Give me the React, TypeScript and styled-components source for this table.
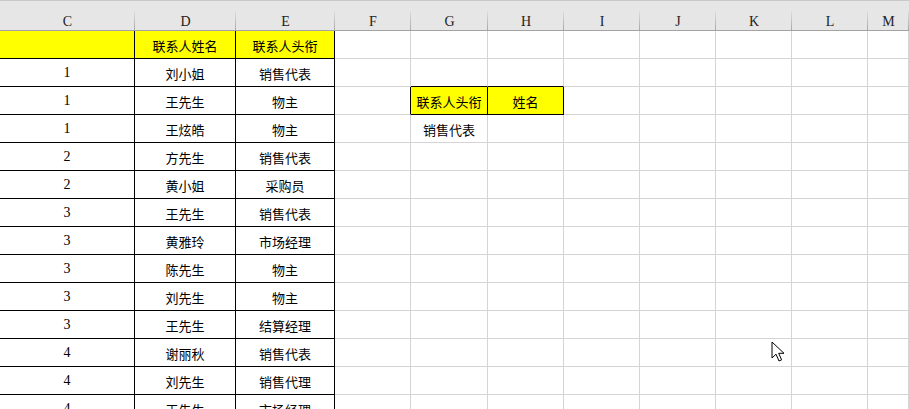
import React from "react";
import styled, { createGlobalStyle } from "styled-components";

const GlobalStyle = createGlobalStyle`
  html, body {
    margin: 0;
    padding: 0;
    background: #ffffff;
    overflow: hidden;
    height: 409px;
  }
  #root {
    height: 409px;
    overflow: hidden;
  }
`;

const COLS = "135px 101px 99px 76px 77px 76px 76px 76px 76px 76px 1fr";
const LETTERS = ["C", "D", "E", "F", "G", "H", "I", "J", "K", "L", "M"];

const Sheet = styled.div`
  position: relative;
  width: 909px;
  height: 409px;
  overflow: hidden;
  display: flex;
  flex-direction: column;
  background: #ffffff;
`;

const HeaderBar = styled.div`
  box-sizing: border-box;
  height: 31px;
  flex: none;
  background: #e6e6e6;
  border-top: 1px solid #c9c9c9;
  border-bottom: 1px solid #a3a3a3;
  padding-top: 10px;
`;

const HeaderGrid = styled.div`
  display: grid;
  grid-template-columns: ${COLS};
  height: 19px;
`;

const HeaderCell = styled.div`
  box-sizing: border-box;
  height: 19px;
  text-align: center;
  font-family: "Liberation Serif", "DejaVu Serif", serif;
  font-size: 14px;
  line-height: 22px;
  color: #222;
  background: linear-gradient(to bottom, #dedede, #a9a9a9) right top / 1px 100% no-repeat;
  overflow: hidden;
  white-space: nowrap;
`;

const Row = styled.div`
  display: grid;
  grid-template-columns: ${COLS};
  height: 28px;
  flex: none;
`;

const Cell = styled.div<{ $r?: boolean; $b?: boolean; $y?: boolean }>`
  box-sizing: border-box;
  height: 28px;
  border-right: 1px solid ${(p) => (p.$r ? "#000000" : "#d4d4d4")};
  border-bottom: 1px solid ${(p) => (p.$b ? "#000000" : "#d4d4d4")};
  background: ${(p) => (p.$y ? "#ffff00" : "#ffffff")};
  display: flex;
  align-items: center;
  justify-content: center;
  font-family: "Liberation Serif", "Noto Sans CJK SC", serif;
  font-size: 14px;
  color: #000;
  white-space: nowrap;
  overflow: hidden;
  padding-top: 1px;
`;

const CjkText = styled.span`
  font-family: "Noto Sans CJK SC", sans-serif;
  font-size: 13px;
`;

const Cursor = styled.svg`
  position: absolute;
  left: 771px;
  top: 341px;
  width: 14px;
  height: 22px;
`;

type RowData = [string, string, string];

const data: RowData[] = [
  ["1", "刘小姐", "销售代表"],
  ["1", "王先生", "物主"],
  ["1", "王炫皓", "物主"],
  ["2", "方先生", "销售代表"],
  ["2", "黄小姐", "采购员"],
  ["3", "王先生", "销售代表"],
  ["3", "黄雅玲", "市场经理"],
  ["3", "陈先生", "物主"],
  ["3", "刘先生", "物主"],
  ["3", "王先生", "结算经理"],
  ["4", "谢丽秋", "销售代表"],
  ["4", "刘先生", "销售代理"],
  ["4", "王先生", "市场经理"],
];

type Extra = { g?: string; h?: string; gy?: boolean; fR?: boolean; gB?: boolean };

const extras: Record<number, Extra> = {
  0: { gB: true },
  1: { g: "联系人头衔", h: "姓名", gy: true, fR: true, gB: true },
  2: { g: "销售代表" },
};

export default function App() {
  return (
    <>
      <GlobalStyle />
      <Sheet>
        <HeaderBar>
          <HeaderGrid>
            {LETTERS.map((l) => (
              <HeaderCell key={l}>{l}</HeaderCell>
            ))}
          </HeaderGrid>
        </HeaderBar>

        <Row>
          <Cell $r $b $y />
          <Cell $r $b $y>
            <CjkText>联系人姓名</CjkText>
          </Cell>
          <Cell $r $b $y>
            <CjkText>联系人头衔</CjkText>
          </Cell>
          <Cell />
          <Cell />
          <Cell />
          <Cell />
          <Cell />
          <Cell />
          <Cell />
          <Cell />
        </Row>

        {data.map((d, i) => {
          const ex = extras[i] || {};
          return (
            <Row key={i}>
              <Cell $r $b>
                {d[0]}
              </Cell>
              <Cell $r $b>
                <CjkText>{d[1]}</CjkText>
              </Cell>
              <Cell $r $b>
                <CjkText>{d[2]}</CjkText>
              </Cell>
              <Cell $r={ex.fR} />
              <Cell $r={ex.gy} $b={ex.gB} $y={ex.gy}>
                {ex.g && <CjkText>{ex.g}</CjkText>}
              </Cell>
              <Cell $r={ex.gy} $b={ex.gB} $y={ex.gy}>
                {ex.h && <CjkText>{ex.h}</CjkText>}
              </Cell>
              <Cell />
              <Cell />
              <Cell />
              <Cell />
              <Cell />
            </Row>
          );
        })}

        <Cursor viewBox="0 0 14 22">
          <path
            d="M1 1 L1 17 L5 13.2 L8 20 L10.6 18.9 L7.7 12.3 L13 12.3 Z"
            fill="#ffffff"
            stroke="#000000"
            strokeWidth="1"
            strokeLinejoin="miter"
          />
        </Cursor>
      </Sheet>
    </>
  );
}
